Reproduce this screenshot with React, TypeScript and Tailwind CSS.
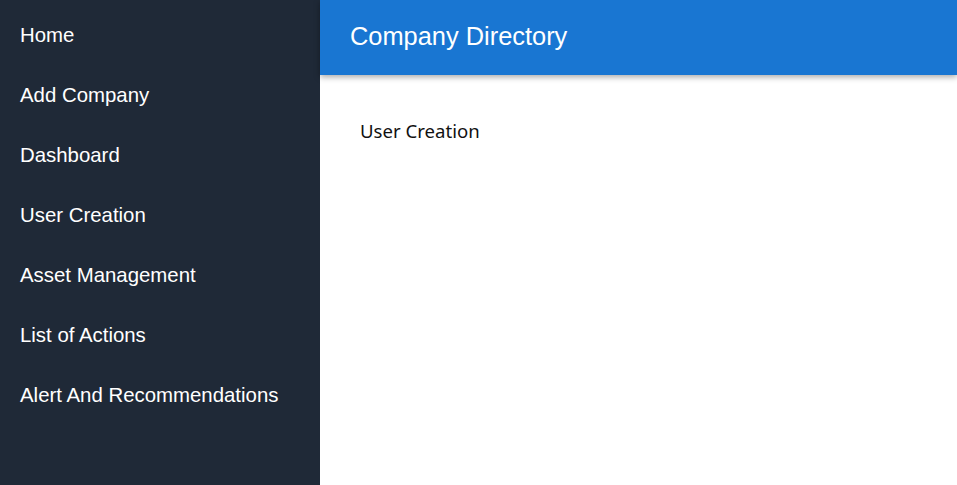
import React from "react";

const items = [
  "Home",
  "Add Company",
  "Dashboard",
  "User Creation",
  "Asset Management",
  "List of Actions",
  "Alert And Recommendations",
];

export default function App() {
  return (
    <div className="flex h-[485px] w-full bg-white">
      <aside className="flex w-[320px] shrink-0 flex-col bg-[#1f2937] pt-[5px]">
        {items.map((it) => (
          <div
            key={it}
            className="flex h-[60px] items-center px-5 text-[20.4px] text-white"
            style={{ fontFamily: '"Liberation Sans", Arial, sans-serif' }}
          >
            {it}
          </div>
        ))}
      </aside>
      <main className="flex flex-1 flex-col">
        <header
          className="h-[75px] bg-[#1976d2] px-[30px] pt-[17px] text-[25.4px] leading-normal text-white shadow-[0_2px_6px_rgba(0,0,0,0.35)]"
          style={{ fontFamily: '"Liberation Sans", Arial, sans-serif' }}
        >
          Company Directory
        </header>
        <div
          className="px-10 pt-[43px] text-[18.6px] leading-[26px] text-[#111]"
          style={{ fontFamily: '"Noto Sans", "Open Sans", sans-serif' }}
        >
          User Creation
        </div>
      </main>
    </div>
  );
}
